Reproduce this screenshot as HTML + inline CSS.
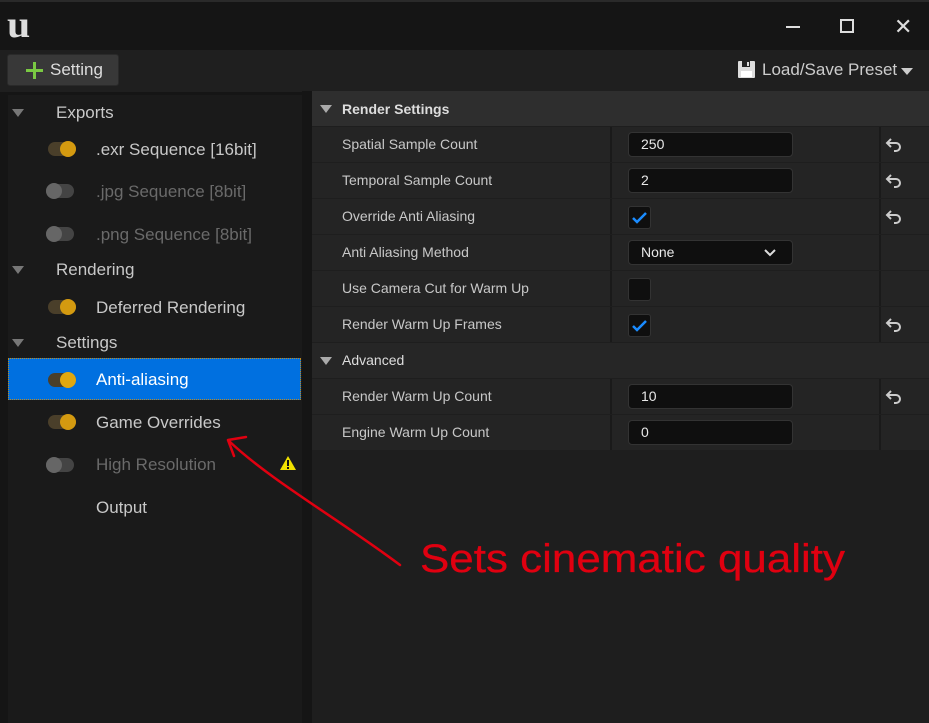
<!DOCTYPE html>
<html><head><style>
*{margin:0;padding:0;box-sizing:border-box}
body{width:929px;height:723px;background:#151515;font-family:"Liberation Sans",sans-serif;position:relative;overflow:hidden;color:#c0c0c0}
.a{position:absolute}
.tb{left:0;top:0;width:929px;height:50px;background:#151515;border-top:2px solid #2a2a2a}
.tool{left:0;top:50px;width:929px;height:42px;background:#1f1f1f}
.btn{left:7px;top:54px;width:112px;height:32px;background:#383838;border-radius:3px;border:1px solid #2a2a2a;color:#ddd;font-size:17px;line-height:30px;padding-left:42px}
.left{left:8px;top:95px;width:294px;height:628px;background:#1a1a1a}
.right{left:312px;top:91px;width:617px;height:632px;background:#1e1e1e}
.li{position:absolute;font-size:16px;color:#c8c8c8}
.tri{position:absolute;width:0;height:0;border-left:6px solid transparent;border-right:6px solid transparent;border-top:8px solid #777}
.tg{position:absolute;width:28px;height:14px;border-radius:7px}
.tg i{position:absolute;top:-1px;width:16px;height:16px;border-radius:50%}
.row{position:absolute;left:312px;width:617px;height:35px;background:#242424;font-size:14px;color:#c8c8c8}
.row .l{position:absolute;left:30px;top:9px}
.row .d1{position:absolute;left:298px;top:0;width:2px;height:35px;background:#1a1a1a}
.row .d2{position:absolute;left:567px;top:0;width:2px;height:35px;background:#1a1a1a}
.inp{position:absolute;left:316px;top:5px;width:165px;height:25px;background:#0f0f0f;border:1px solid #333;border-radius:4px;color:#e8e8e8;padding-left:12px;line-height:23px;font-size:14px}
.cb{position:absolute;left:316px;top:7px;width:23px;height:23px;background:#0f0f0f;border:1px solid #333;border-radius:3px}
.hdr{position:absolute;left:312px;width:617px;height:35px;background:#2e2e2e;font-size:14px;color:#ddd}
.rs{position:absolute;left:573px;top:10px}
</style></head><body>
<div class="a tb"></div>
<div class="a" style="left:8px;top:6px;font-family:'Liberation Serif',serif;font-weight:bold;font-size:38px;color:#ddd;line-height:38px;transform:scaleX(1.1)">u</div>
<div class="a" style="left:786px;top:26px;width:14px;height:2px;background:#ddd"></div>
<div class="a" style="left:840px;top:19px;width:14px;height:14px;border:2px solid #ddd"></div>
<div class="a" style="left:894px;top:16px;font-size:22px;color:#ddd;line-height:22px">✕</div>
<div class="a tool"></div>
<div class="a btn">Setting</div>
<div class="a" style="left:26px;top:69px;width:17px;height:3px;background:#7ac943"></div>
<div class="a" style="left:33px;top:62px;width:3px;height:17px;background:#7ac943"></div>
<svg class="a" style="left:737px;top:60px" width="19" height="19"><rect x="1" y="1" width="17" height="17" rx="1" fill="#ddd"/><rect x="5" y="1" width="8" height="6" fill="#222"/><rect x="10" y="2" width="2" height="4" fill="#ddd"/><rect x="4" y="11" width="11" height="6" fill="#fff"/></svg>
<div class="a" style="left:762px;top:60px;font-size:17px;color:#ccc">Load/Save Preset</div>
<div class="tri" style="left:901px;top:68px;border-top-color:#ccc;border-width:7px 6px 0"></div>
<div class="a left"></div>
<div class="a" style="left:302px;top:91px;width:10px;height:632px;background:#151515"></div>
<div class="tri" style="left:12px;top:109px"></div><div class="li" style="left:56px;top:103px;font-size:17px">Exports</div>
<div class="tg" style="left:48px;top:142px;background:#4a3f2a"><i style="left:12px;background:#d49a10"></i></div><div class="li" style="left:96px;top:140px;font-size:17px">.exr Sequence [16bit]</div>
<div class="tg" style="left:46px;top:184px;background:#444"><i style="left:0;background:#666"></i></div><div class="li" style="left:96px;top:182px;font-size:17px;color:#6a6a6a">.jpg Sequence [8bit]</div>
<div class="tg" style="left:46px;top:227px;background:#444"><i style="left:0;background:#666"></i></div><div class="li" style="left:96px;top:225px;font-size:17px;color:#6a6a6a">.png Sequence [8bit]</div>
<div class="tri" style="left:12px;top:266px"></div><div class="li" style="left:56px;top:260px;font-size:17px">Rendering</div>
<div class="tg" style="left:48px;top:300px;background:#4a3f2a"><i style="left:12px;background:#d49a10"></i></div><div class="li" style="left:96px;top:298px;font-size:17px">Deferred Rendering</div>
<div class="tri" style="left:12px;top:339px"></div><div class="li" style="left:56px;top:333px;font-size:17px">Settings</div>
<div class="a" style="left:8px;top:358px;width:293px;height:42px;background:#0070e0;border:1px dotted #c08a20"></div>
<div class="tg" style="left:48px;top:373px;background:#4a3f2a"><i style="left:12px;background:#e0a810"></i></div><div class="li" style="left:96px;top:370px;font-size:17px;color:#fff">Anti-aliasing</div>
<div class="tg" style="left:48px;top:415px;background:#4a3f2a"><i style="left:12px;background:#d49a10"></i></div><div class="li" style="left:96px;top:413px;font-size:17px">Game Overrides</div>
<div class="tg" style="left:46px;top:458px;background:#444"><i style="left:0;background:#666"></i></div><div class="li" style="left:96px;top:455px;font-size:17px;color:#6a6a6a">High Resolution</div>
<svg class="a" style="left:279px;top:455px" width="18" height="16"><path d="M9 1L17 15H1Z" fill="#f0e000"/><rect x="8" y="5" width="2" height="6" fill="#111"/><rect x="8" y="12" width="2" height="2" fill="#111"/></svg>
<div class="li" style="left:96px;top:498px;font-size:17px">Output</div>
<div class="a right"></div>
<svg width="0" height="0" style="position:absolute"><defs><symbol id="r" viewBox="0 0 18 16"><path d="M6 2L2 6l4 4M2 6h9a4 4 0 0 1 0 8H9" stroke="#ccc" stroke-width="2" fill="none"/></symbol></defs></svg>
<div class="hdr" style="top:91px"><div class="tri" style="left:8px;top:14px;border-top-color:#aaa"></div><b style="position:absolute;left:30px;top:10px">Render Settings</b></div>
<div class="row" style="top:127px"><span class="l">Spatial Sample Count</span><i class="d1"></i><div class="inp">250</div><i class="d2"></i><svg class="rs" width="18" height="16"><use href="#r"/></svg></div>
<div class="row" style="top:163px"><span class="l">Temporal Sample Count</span><i class="d1"></i><div class="inp">2</div><i class="d2"></i><svg class="rs" width="18" height="16"><use href="#r"/></svg></div>
<div class="row" style="top:199px"><span class="l">Override Anti Aliasing</span><i class="d1"></i><div class="cb"><svg width="21" height="21"><path d="M4 11l4 4 9-9" stroke="#1a8cff" stroke-width="2.5" fill="none"/></svg></div><i class="d2"></i><svg class="rs" width="18" height="16"><use href="#r"/></svg></div>
<div class="row" style="top:235px"><span class="l">Anti Aliasing Method</span><i class="d1"></i><div class="inp">None<svg style="position:absolute;right:16px;top:8px" width="12" height="8"><path d="M1 1l5 5 5-5" stroke="#ddd" stroke-width="2" fill="none"/></svg></div><i class="d2"></i></div>
<div class="row" style="top:271px"><span class="l">Use Camera Cut for Warm Up</span><i class="d1"></i><div class="cb"></div><i class="d2"></i></div>
<div class="row" style="top:307px"><span class="l">Render Warm Up Frames</span><i class="d1"></i><div class="cb"><svg width="21" height="21"><path d="M4 11l4 4 9-9" stroke="#1a8cff" stroke-width="2.5" fill="none"/></svg></div><i class="d2"></i><svg class="rs" width="18" height="16"><use href="#r"/></svg></div>
<div class="hdr" style="top:343px;background:#262626"><div class="tri" style="left:8px;top:14px;border-top-color:#aaa"></div><span style="position:absolute;left:30px;top:9px">Advanced</span></div>
<div class="row" style="top:379px"><span class="l">Render Warm Up Count</span><i class="d1"></i><div class="inp">10</div><i class="d2"></i><svg class="rs" width="18" height="16"><use href="#r"/></svg></div>
<div class="row" style="top:415px"><span class="l">Engine Warm Up Count</span><i class="d1"></i><div class="inp">0</div><i class="d2"></i></div>
<svg class="a" style="left:0;top:0" width="929" height="723">
<path d="M246 437 L228 440 M228 440 L234 456 M229 441 C270 480 340 520 400 565" stroke="#e00010" stroke-width="2.5" fill="none" stroke-linecap="round"/>
<text x="420" y="572" fill="#e00010" font-family="Liberation Sans Narrow, Liberation Sans" font-size="40" textLength="425" lengthAdjust="spacingAndGlyphs" stroke="#e00010" stroke-width="0.3">Sets  cinematic  quality</text>
</svg>
</body></html>
